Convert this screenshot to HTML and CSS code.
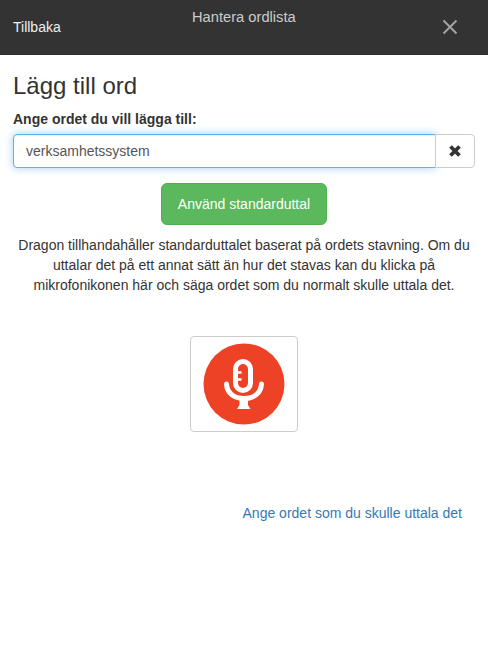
FILE: index.html
```html
<!DOCTYPE html>
<html lang="sv">
<head>
    <meta charset="UTF-8">
    <title>Hantera ordlista</title>
    <link rel="stylesheet" href="styles.css">
</head>
<body>
    <header class="topbar">
        <a class="topbar__back">Tillbaka</a>
        <div class="topbar__title">Hantera ordlista</div>
        <svg class="topbar__close" width="16" height="16" viewBox="0 0 16 16">
            <path d="M1.5 1.5 L14.5 14.5 M14.5 1.500 L1.500 14.5" stroke="#a3a3a3" stroke-width="2" fill="none"/>
        </svg>
    </header>

    <main class="content">
        <h1>Lägg till ord</h1>
        <label for="word">Ange ordet du vill lägga till:</label>
        <div class="input-group">
            <input type="text" id="word" value="verksamhetssystem">
            <button class="input-group__clear" type="button">
                <svg width="14" height="14" viewBox="0 0 14 14">
                    <path d="M2.5 2.500 L11.5 11.5 M11.5 2.500 L2.500 11.5" stroke="#333" stroke-width="3.800" fill="none"/>
                </svg>
            </button>
        </div>

        <div class="actions">
            <button class="btn-success" type="button">Använd standarduttal</button>
        </div>

        <p class="info">Dragon tillhandahåller standarduttalet baserat på ordets stavning. Om du uttalar det på ett annat sätt än hur det stavas kan du klicka på mikrofonikonen här och säga ordet som du normalt skulle uttala det.</p>

        <div class="mic-wrap">
            <button class="mic-btn" type="button">
                <svg width="82" height="82" viewBox="0 0 82 82">
                    <circle cx="41" cy="41" r="40.5" fill="#ee4227"/>
                    <rect x="32.5" y="18.5" width="15" height="29" rx="7.500" fill="none" stroke="#fff" stroke-width="5"/>
                    <path d="M34 29.500 H38.500 M34 36.500 H38.500" stroke="#fff" stroke-width="2.500" fill="none"/>
                    <path d="M23.500 41 C24 50 31 55.500 41 55.500 C51 55.500 58 50 58.500 41" stroke="#fff" stroke-width="5" stroke-linecap="round" fill="none"/>
                    <path d="M36.500 55 H45 V62 L47.500 66 H34 L36.500 62 Z" fill="#fff"/>
                </svg>
            </button>
        </div>

        <div class="link-row">
            <a class="link">Ange ordet som du skulle uttala det</a>
        </div>
    </main>
</body>
</html>
```

FILE: styles.css
```css
* {
    box-sizing: border-box;
}

body {
    margin: 0;
    background-color: #fff;
    color: #333;
    font-family: "Liberation Sans", Arial, sans-serif;
    font-size: 14px;
    line-height: 20px;
}

.topbar {
    display: flex;
    height: 55px;
    background-color: #333;
    border-bottom: 1px solid #2e2e2e;
}

.topbar__back {
    color: #eee;
    margin: 17px 0 0 13px;
}

.topbar__title {
    flex: 1;
    color: #ccc;
    font-size: 14.7px;
    text-align: center;
    margin: 7px 0 0 0;
    padding-right: 15px;
}

.topbar__close {
    margin: 19px 30px 0 0;
}

.content {
    padding: 0 13px;
}

h1 {
    font-size: 24px;
    font-weight: 400;
    line-height: 26px;
    margin: 18px 0 0;
}

label {
    display: block;
    font-weight: 700;
    margin-top: 10px;
}

.input-group {
    display: flex;
    margin-top: 5px;
}

.input-group input {
    flex: 1;
    min-width: 0;
    height: 34px;
    padding: 6px 12px;
    font: inherit;
    color: #555;
    border: 1px solid #66afe9;
    border-radius: 4px 0 0 4px;
    outline: none;
    box-shadow: inset 0 1px 1px rgba(0, 0, 0, .075), 0 0 8px rgba(102, 175, 233, .6);
}

.input-group__clear {
    width: 40px;
    height: 34px;
    margin-left: -1px;
    padding: 0;
    display: flex;
    align-items: center;
    justify-content: center;
    background-color: #fff;
    border: 1px solid #ccc;
    border-radius: 0 4px 4px 0;
}

.actions {
    display: flex;
    justify-content: center;
    margin-top: 15px;
}

.btn-success {
    width: 166px;
    height: 42px;
    padding: 0;
    font: inherit;
    color: #fff;
    background-color: #5cb85c;
    border: 1px solid #4cae4c;
    border-radius: 6px;
}

.info {
    margin: 10px 0 0;
    text-align: center;
}

.mic-wrap {
    display: flex;
    justify-content: center;
    margin-top: 41px;
}

.mic-btn {
    width: 108px;
    height: 96px;
    padding: 0;
    display: flex;
    align-items: center;
    justify-content: center;
    background-color: #fff;
    border: 1px solid #ccc;
    border-radius: 4px;
}

.link-row {
    display: flex;
    justify-content: flex-end;
    margin-top: 71px;
    padding-right: 13px;
}

.link {
    color: #337ab7;
}
```
